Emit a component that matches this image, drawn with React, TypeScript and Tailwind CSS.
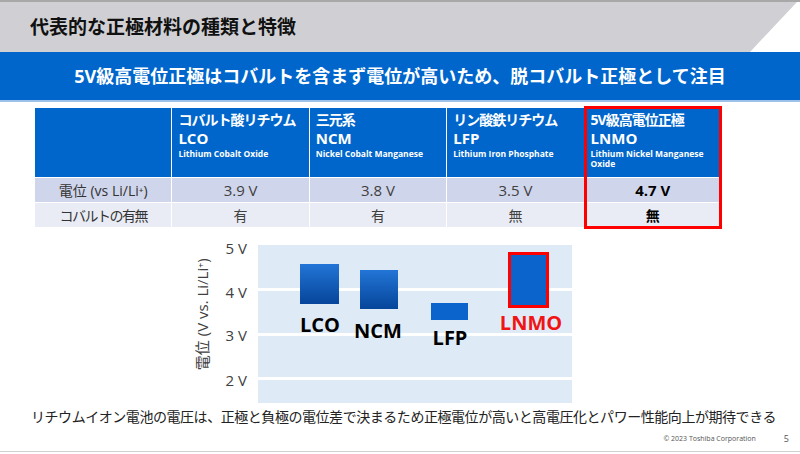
const cols = [
  { jp: "コバルト酸リチウム", code: "LCO", en: "Lithium Cobalt Oxide", v: "3.9 V", co: "有" },
  { jp: "三元系", code: "NCM", en: "Nickel Cobalt Manganese", v: "3.8 V", co: "有" },
  { jp: "リン酸鉄リチウム", code: "LFP", en: "Lithium Iron Phosphate", v: "3.5 V", co: "無" },
  { jp: "5V級高電位正極", code: "LNMO", en: "Lithium Nickel Manganese Oxide", v: "4.7 V", co: "無" },
];

// chart coords: plot origin at 5 V, 44px per volt
const bars = [
  { name: "LCO", x: 42, y: 19, w: 39, h: 40, grad: true, lx: 62, ly: 80 },
  { name: "NCM", x: 102, y: 25, w: 38, h: 39, grad: true, lx: 120, ly: 86 },
  { name: "LFP", x: 173, y: 58, w: 37, h: 17, grad: false, lx: 192, ly: 93 },
];

const ticks = [
  { label: "5 V", y: 3 },
  { label: "4 V", y: 47 },
  { label: "3 V", y: 90 },
  { label: "2 V", y: 135 },
];

export default function App() {
  return (
    <div className="w-[800px] h-[454px] bg-white overflow-hidden flex flex-col font-['Open_Sans','Noto_Sans_CJK_JP',sans-serif] text-[#333]">
      {/* title bar */}
      <div className="h-[52px] shrink-0 border-t-2 border-[#a8a8a8]">
        <div className="h-full bg-[#d0d0d4] [clip-path:polygon(0_0,797px_0,750px_100%,0_100%)] flex items-center pl-[30px]">
          <h1 className="text-[19px] font-bold text-[#111] leading-none">代表的な正極材料の種類と特徴</h1>
        </div>
      </div>

      <div className="h-[50px] shrink-0 bg-[#0066cc] border-b-2 border-[#9cc2ea] flex items-center justify-center">
        <p className="text-white text-[18px] font-bold leading-none">
          5V級高電位正極はコバルトを含まず電位が高いため、脱コバルト正極として注目
        </p>
      </div>

      {/* table */}
      <div className="relative mt-[6px] ml-[35px] w-[686px] shrink-0">
        <div className="grid grid-cols-5 gap-px bg-white">
          <div className="h-[69px] bg-[#0066cc]" />
          {cols.map((c) => (
            <div key={c.code} className="h-[69px] bg-[#0066cc] text-white pl-[6px] pr-[4px] pt-[3px]">
              <div className="text-[14px] font-bold leading-[18px] tracking-[-1px]">{c.jp}</div>
              <div className="text-[15px] font-bold leading-[18px]">{c.code}</div>
              <div className="text-[8.5px] font-bold leading-[10px] mt-[2px]">{c.en}</div>
            </div>
          ))}

          <div className="h-[24px] bg-[#cfd5ea] flex items-center justify-center text-[14px] text-[#333]">
            電位 (vs Li/Li⁺)
          </div>
          {cols.map((c, i) => (
            <div
              key={c.code + "v"}
              className={
                "h-[24px] bg-[#cfd5ea] flex items-center justify-center text-[15px] " +
                (i === 3 ? "font-bold text-black" : "text-[#404040]")
              }
            >
              {c.v}
            </div>
          ))}

          <div className="h-[24px] bg-[#e9ecf5] flex items-center justify-center text-[14px] tracking-[-1.5px] text-[#333]">
            コバルトの有無
          </div>
          {cols.map((c, i) => (
            <div
              key={c.code + "c"}
              className={
                "h-[24px] bg-[#e9ecf5] flex items-center justify-center text-[14px] " +
                (i === 3 ? "font-bold text-black" : "text-[#404040]")
              }
            >
              {c.co}
            </div>
          ))}
        </div>
        <div className="absolute left-[549px] -right-px -top-[2px] -bottom-[2px] border-[3px] border-[#f00]" />
      </div>

      {/* chart */}
      <div className="mt-[13px] h-[163px] shrink-0 flex items-end">
        <div className="ml-[192px] w-[20px] h-[158px] pb-[20px] flex items-center justify-center">
          <span className="-rotate-90 whitespace-nowrap text-[15px] text-[#404040]">電位 (V vs. Li/Li⁺)</span>
        </div>
        <div className="relative w-[46px] h-[158px]">
          {ticks.map((t) => (
            <span
              key={t.label}
              className="absolute right-[11px] -translate-y-1/2 text-[15px] leading-none text-[#404040]"
              style={{ top: t.y }}
            >
              {t.label}
            </span>
          ))}
        </div>
        <div className="relative w-[314px] h-[158px]">
          <svg width="314" height="158" className="block">
            <defs>
              <linearGradient id="bar" x1="0" y1="0" x2="0" y2="1">
                <stop offset="0" stopColor="#2275d6" />
                <stop offset="1" stopColor="#06459a" />
              </linearGradient>
            </defs>
            <rect width="314" height="158" fill="#deebf7" />
            <rect y="43" width="314" height="3" fill="#fff" />
            <rect y="88" width="314" height="3" fill="#fff" />
            <rect y="132" width="314" height="3" fill="#fff" />
            {bars.map((b) => (
              <rect key={b.name} x={b.x} y={b.y} width={b.w} height={b.h} fill={b.grad ? "url(#bar)" : "#0a64cc"} />
            ))}
            <rect x="251.5" y="8.5" width="38" height="53" fill="#0a64cc" stroke="#f00" strokeWidth="3" />
          </svg>
          {bars.map((b) => (
            <span
              key={b.name + "l"}
              className="absolute -translate-x-1/2 -translate-y-1/2 text-[20px] font-bold leading-none text-black"
              style={{ left: b.lx, top: b.ly }}
            >
              {b.name}
            </span>
          ))}
          <span className="absolute left-[273px] top-[78px] -translate-x-1/2 -translate-y-1/2 text-[20px] font-bold leading-none text-[#f01414]">
            LNMO
          </span>
        </div>
      </div>

      <p className="mt-[5px] h-[18px] leading-[18px] pl-[31px] text-[14px] tracking-[-0.45px] text-[#222] whitespace-nowrap">
        リチウムイオン電池の電圧は、正極と負極の電位差で決まるため正極電位が高いと高電圧化とパワー性能向上が期待できる
      </p>

      <div className="mt-[7px] h-[10px] flex items-center justify-end pr-[11px] text-[#555]">
        <span className="text-[7px] leading-none">© 2023 Toshiba Corporation</span>
        <span className="ml-[28px] text-[9px] leading-none">5</span>
      </div>

      <div className="mt-[8px] h-px bg-[#cfcfcf] shrink-0" />
    </div>
  );
}
